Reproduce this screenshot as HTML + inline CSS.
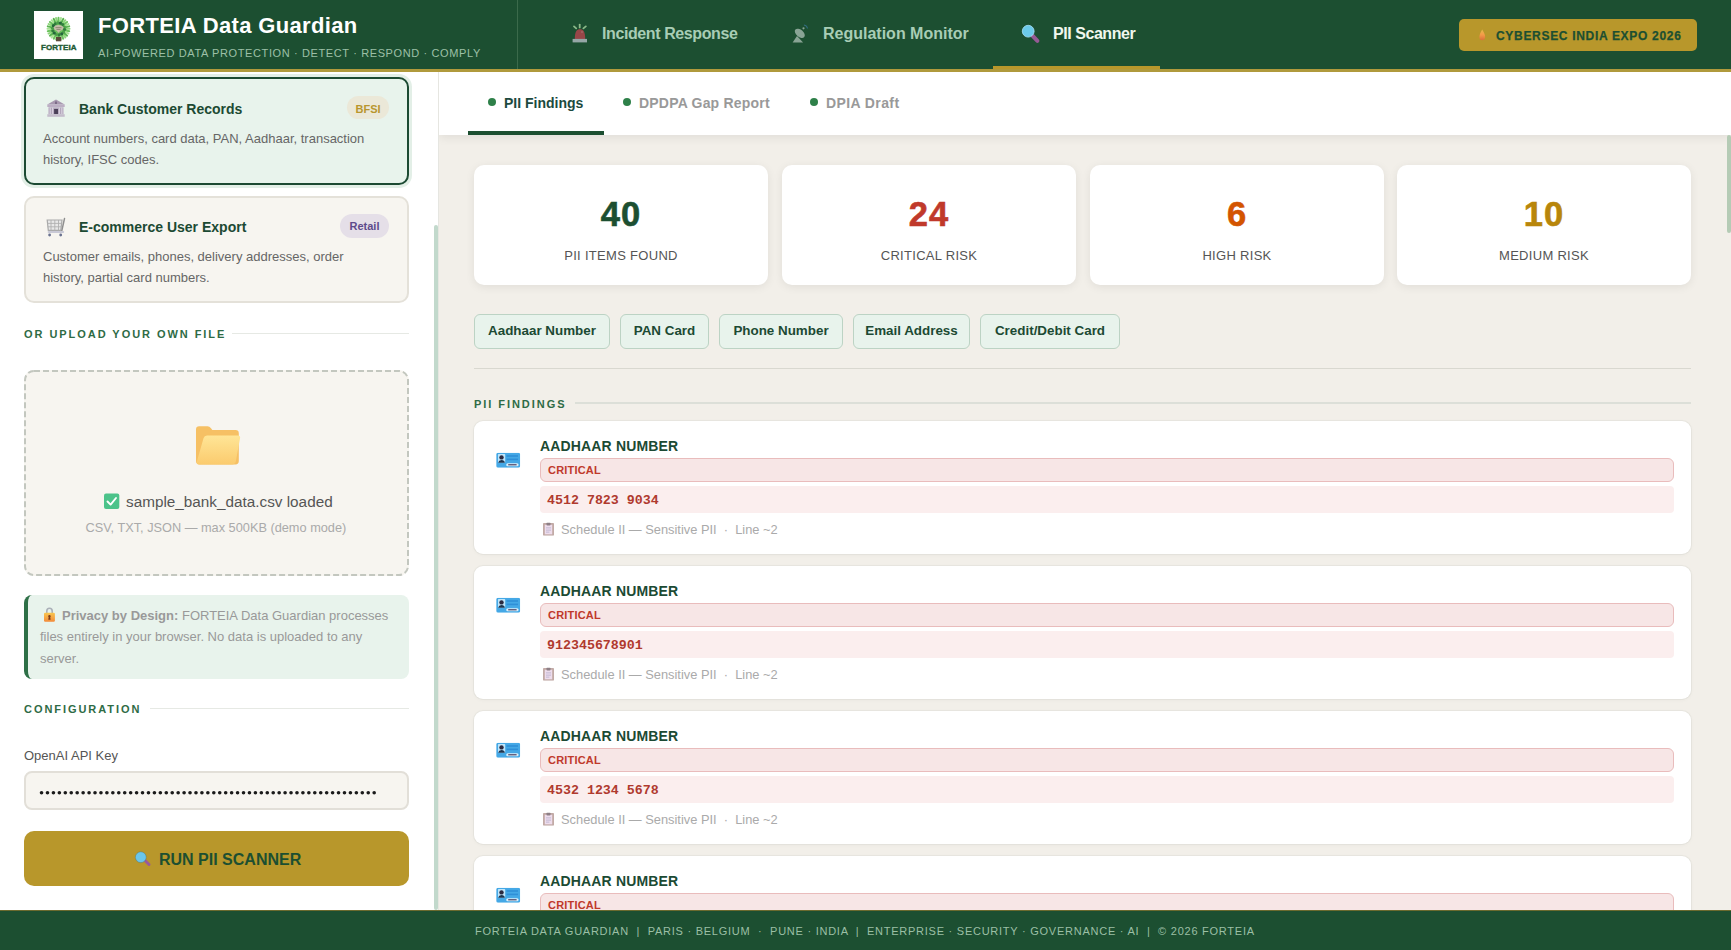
<!DOCTYPE html>
<html><head><meta charset="utf-8">
<style>
*{box-sizing:border-box;margin:0;padding:0}
html,body{width:1731px;height:950px;overflow:hidden;background:#fff;font-family:"Liberation Sans",sans-serif}
.abs{position:absolute}
#hdr{position:absolute;left:0;top:0;width:1731px;height:72px;background:#1c4f31;border-bottom:3px solid #b09a3c}
#logo{position:absolute;left:34px;top:11px;width:49px;height:48px;background:#fff}
#title{position:absolute;left:98px;top:13px;color:#fff;font-weight:bold;font-size:22px;letter-spacing:0.35px;white-space:nowrap}
#subtitle{position:absolute;left:98px;top:47px;color:#9dc0a7;font-size:11px;letter-spacing:0.62px;white-space:nowrap}
#vdiv{position:absolute;left:517px;top:0;width:1px;height:69px;background:#3b6a4b}
.nav{position:absolute;top:0;height:69px;white-space:nowrap}
.nav .ic{position:absolute;top:24px}
.nav .tx{position:absolute;top:25px;font-size:16px;font-weight:bold;color:#a8cdb5}
#badge{position:absolute;left:1459px;top:19px;width:238px;height:32px;background:#b8972b;border-radius:5px}
#badge .tx{position:absolute;left:37px;top:10px;font-size:12px;font-weight:bold;color:#1c4f31;letter-spacing:0.69px;white-space:nowrap;-webkit-text-stroke:0.25px #1c4f31}

#side{position:absolute;left:0;top:72px;width:439px;height:838px;background:#fff;border-right:1px solid #e6e6e1;overflow:hidden}
.card{position:absolute;left:24px;width:385px;border-radius:10px}
.card .ttl{position:absolute;left:53px;font-size:14px;font-weight:bold;color:#1c4a33;white-space:nowrap}
.card .desc{position:absolute;left:17px;font-size:13px;color:#666;line-height:20.7px;width:335px}
.pill{position:absolute;border-radius:12px;font-size:11px;font-weight:bold;text-align:center}
.sec{position:absolute;left:24px;font-size:11px;font-weight:bold;color:#2e6b45;letter-spacing:1.95px;white-space:nowrap}
.secline{position:absolute;height:1px;background:#e6e9e4}

#main{position:absolute;left:439px;top:72px;width:1292px;height:838px;background:#f2efe9;overflow:hidden}
#tabs{position:absolute;left:0;top:0;width:1292px;height:63px;background:#fff;box-shadow:0 3px 9px rgba(0,0,0,0.07)}
.tab{position:absolute;top:0;height:63px;white-space:nowrap}
.tab .dot{position:absolute;top:26px;width:8px;height:8px;border-radius:50%;background:#2e8049}
.tab .tx{position:absolute;top:22.5px;font-size:14px;font-weight:bold;color:#999;letter-spacing:0.2px}
.stat{position:absolute;top:93px;width:294px;height:120px;background:#fff;border-radius:10px;box-shadow:0 2px 10px rgba(0,0,0,0.075)}
.stat .n{position:absolute;left:0;width:100%;top:29.5px;text-align:center;font-size:34.5px;font-weight:bold;letter-spacing:1px;-webkit-text-stroke:0.6px currentColor}
.stat .l{position:absolute;left:0;width:100%;top:82.5px;text-align:center;font-size:13px;color:#555;letter-spacing:0.3px}
.chip{position:absolute;top:242px;height:35px;background:#e8f3ec;border:1.5px solid #bcd3c4;border-radius:6px;font-size:13.4px;font-weight:bold;color:#1c4a33;line-height:32px;text-align:center;white-space:nowrap}
.find{position:absolute;left:35px;width:1217px;height:133px;background:#fff;border-radius:9px;box-shadow:0 0 0 1px rgba(40,60,40,0.045),0 1px 4px rgba(0,0,0,0.04)}
.find .ic{position:absolute;left:22px;top:32px}
.find .nm{position:absolute;left:66px;top:17.3px;font-size:14px;font-weight:bold;color:#1c4a33;letter-spacing:0.16px;white-space:nowrap}
.find .sev{position:absolute;left:66px;top:37px;width:1134px;height:24px;background:#f7e6e6;border:1.5px solid #e9bcbc;border-radius:6px}
.find .sev span{position:absolute;left:7px;top:5px;font-size:11px;font-weight:bold;color:#c0392b;letter-spacing:0.2px}
.find .val{position:absolute;left:66px;top:65px;width:1134px;height:27px;background:#fbeeee;border-radius:4px}
.find .val span{position:absolute;left:7px;top:7px;font-family:"Liberation Mono",monospace;font-size:13.3px;font-weight:bold;color:#b03a2e}
.find .meta{position:absolute;left:69px;top:101px;white-space:nowrap}
.find .meta span{position:absolute;left:18px;top:0;font-size:12.85px;color:#aaa;white-space:nowrap}

#foot{position:absolute;left:0;top:910px;width:1731px;height:40px;background:#1c4f31;border-top:1px solid #6b6a2e}
#foot .tx{position:absolute;left:475px;top:13.5px;font-size:11px;color:#9bbfa5;letter-spacing:0.75px;white-space:nowrap}
</style></head>
<body>
<div id="hdr">
  <div id="logo"></div>
  <div id="title">FORTEIA Data Guardian</div>
  <div id="subtitle">AI-POWERED DATA PROTECTION · DETECT · RESPOND · COMPLY</div>
  <div id="vdiv"></div>
  <div class="nav" style="left:546px;width:220px"><div class="tx" style="left:56px;letter-spacing:-0.4px">Incident Response</div></div>
  <div class="nav" style="left:766px;width:227px"><div class="tx" style="left:57px">Regulation Monitor</div></div>
  <div class="nav" style="left:993px;width:167px"><div class="tx" style="left:60px;color:#f0f7ee;letter-spacing:-0.45px">PII Scanner</div>
    <div class="abs" style="left:0;top:66px;width:167px;height:3px;background:#b8972b"></div></div>
  <div id="badge"><div class="tx">CYBERSEC INDIA EXPO 2026</div></div>
</div>

<div id="side">
  <div class="card" style="top:5px;height:108px;background:#e8f3ec;border:2px solid #1c4a33;box-shadow:0 0 0 3px #e3efe7">
    <div class="ttl" style="top:22px">Bank Customer Records</div>
    <div class="pill" style="left:321px;top:17px;width:42px;height:23px;line-height:27px;background:#ebe8d8;color:#b8962e">BFSI</div>
    <div class="desc" style="top:50px">Account numbers, card data, PAN, Aadhaar, transaction history, IFSC codes.</div>
  </div>
  <div class="card" style="top:124px;height:107px;background:#f7f5f0;border:2px solid #e4e1d9">
    <div class="ttl" style="top:20.5px">E-commerce User Export</div>
    <div class="pill" style="left:314px;top:16px;width:49px;height:24px;line-height:25px;background:#e5dfe8;color:#5e4b8b">Retail</div>
    <div class="desc" style="top:49px">Customer emails, phones, delivery addresses, order history, partial card numbers.</div>
  </div>
  <div class="sec" style="top:256px">OR UPLOAD YOUR OWN FILE</div>
  <div class="secline" style="left:232px;top:261px;width:177px"></div>
  <div class="abs" style="left:24px;top:298px;width:385px;height:206px;background:#f7f5f0;border-radius:10px"><svg class="abs" style="left:0;top:0" width="385" height="206"><rect x="1" y="1" width="383" height="204" rx="9" fill="none" stroke="#c3c7bf" stroke-width="2" stroke-dasharray="6 3"/></svg>
    <div class="abs" style="left:102px;top:123px;font-size:15.3px;color:#555;white-space:nowrap">sample_bank_data.csv loaded</div>
    <div class="abs" style="left:61.5px;top:150px;font-size:12.75px;color:#aaa;white-space:nowrap">CSV, TXT, JSON — max 500KB (demo mode)</div>
  </div>
  <div class="abs" style="left:24px;top:523px;width:385px;height:84px;background:#e8f3ec;border-left:4px solid #2e7047;border-radius:8px">
    <div class="abs" style="left:12px;top:10px;width:360px;font-size:13px;line-height:21.4px;color:#999"><span style="display:inline-block;width:22px"></span><b style="color:#999">Privacy by Design:</b> FORTEIA Data Guardian processes files entirely in your browser. No data is uploaded to any server.</div>
  </div>
  <div class="sec" style="top:631px">CONFIGURATION</div>
  <div class="secline" style="left:150px;top:636px;width:259px"></div>
  <div class="abs" style="left:24px;top:676px;font-size:13px;color:#555">OpenAI API Key</div>
  <div class="abs" style="left:24px;top:699px;width:385px;height:39px;background:#f7f5f0;border:2px solid #e2dfd8;border-radius:8px"></div>
  <div class="abs" style="left:24px;top:759px;width:385px;height:55px;background:#b8972b;border-radius:10px">
    <div class="abs" style="left:135px;top:20px;font-size:16px;font-weight:bold;color:#1c4f31;white-space:nowrap">RUN PII SCANNER</div>
  </div>
  <div class="abs" style="left:434px;top:153px;width:4px;height:685px;background:#c2d9cc;border-radius:2px"></div>
</div>

<div id="main">
  <div id="tabs">
    <div class="tab" style="left:29px;width:136px"><div class="dot" style="left:20px"></div><div class="tx" style="left:36px;color:#1c4a3e;letter-spacing:0">PII Findings</div>
      <div class="abs" style="left:0;top:59px;width:136px;height:4px;background:#1c4f31"></div></div>
    <div class="tab" style="left:165px;width:185px"><div class="dot" style="left:19px"></div><div class="tx" style="left:35px">DPDPA Gap Report</div></div>
    <div class="tab" style="left:350px;width:130px"><div class="dot" style="left:21px"></div><div class="tx" style="left:37px;letter-spacing:0.4px">DPIA Draft</div></div>
  </div>
  <div class="stat" style="left:35px"><div class="n" style="color:#1c4f31">40</div><div class="l">PII ITEMS FOUND</div></div>
  <div class="stat" style="left:343px"><div class="n" style="color:#c0392b">24</div><div class="l">CRITICAL RISK</div></div>
  <div class="stat" style="left:651px"><div class="n" style="color:#d35400">6</div><div class="l">HIGH RISK</div></div>
  <div class="stat" style="left:958px"><div class="n" style="color:#b8860b">10</div><div class="l">MEDIUM RISK</div></div>
  <div class="chip" style="left:35px;width:136px">Aadhaar Number</div>
  <div class="chip" style="left:181px;width:89px">PAN Card</div>
  <div class="chip" style="left:280px;width:124px">Phone Number</div>
  <div class="chip" style="left:414px;width:117px">Email Address</div>
  <div class="chip" style="left:541px;width:140px">Credit/Debit Card</div>
  <div class="abs" style="left:35px;top:296px;width:1217px;height:1px;background:#d9d8d0"></div>
  <div class="sec" style="left:35px;top:326px">PII FINDINGS</div>
  <div class="abs" style="left:136px;top:330px;width:1116px;height:2px;background:#dcdfd8"></div>

  <div class="find" style="top:349px"><div class="nm">AADHAAR NUMBER</div><div class="sev"><span>CRITICAL</span></div><div class="val"><span>4512 7823 9034</span></div><div class="meta"><span>Schedule II — Sensitive PII &nbsp;·&nbsp; Line ~2</span></div></div>
  <div class="find" style="top:494px"><div class="nm">AADHAAR NUMBER</div><div class="sev"><span>CRITICAL</span></div><div class="val"><span>912345678901</span></div><div class="meta"><span>Schedule II — Sensitive PII &nbsp;·&nbsp; Line ~2</span></div></div>
  <div class="find" style="top:639px"><div class="nm">AADHAAR NUMBER</div><div class="sev"><span>CRITICAL</span></div><div class="val"><span>4532 1234 5678</span></div><div class="meta"><span>Schedule II — Sensitive PII &nbsp;·&nbsp; Line ~2</span></div></div>
  <div class="find" style="top:784px"><div class="nm">AADHAAR NUMBER</div><div class="sev"><span>CRITICAL</span></div><div class="val"><span>4512 7823 9034</span></div></div>

  <div class="abs" style="left:1288px;top:63px;width:4px;height:98px;background:#b5cbb5;border-radius:2px"></div>
</div>

<svg id="ov" width="1731" height="950" viewBox="0 0 1731 950" style="position:absolute;left:0;top:0;pointer-events:none">
<defs>
 <radialGradient id="gFol" cx="0.5" cy="0.5" r="0.5"><stop offset="0" stop-color="#4a9a4a"/><stop offset="0.6" stop-color="#5fb85a"/><stop offset="1" stop-color="#8fd07a"/></radialGradient>
 <linearGradient id="gFold" x1="0" y1="0" x2="0" y2="1"><stop offset="0" stop-color="#ffe596"/><stop offset="1" stop-color="#fbcb6e"/></linearGradient>
 <linearGradient id="gLock" x1="0" y1="0" x2="0" y2="1"><stop offset="0" stop-color="#f9c74f"/><stop offset="1" stop-color="#f38a3a"/></linearGradient>
 <linearGradient id="gFlame" x1="0" y1="0" x2="0" y2="1"><stop offset="0" stop-color="#e8b84a"/><stop offset="0.5" stop-color="#f49a48"/><stop offset="1" stop-color="#d9703a"/></linearGradient>
<symbol id="idc" viewBox="0 0 24 15" width="24" height="15">
 <rect x="0" y="0" width="24" height="15" rx="1.8" fill="#44a8e6"/>
 <rect x="1.8" y="1.3" width="7.2" height="8.6" rx="0.6" fill="#bfe6fb"/>
 <circle cx="5.3" cy="4.6" r="2.2" fill="#2c2a40"/>
 <path d="M2 9.9 Q2.4 7.4 5.3 7.3 Q8.3 7.4 8.6 9.9Z" fill="#1f3650"/>
 <rect x="10.3" y="2.4" width="11.5" height="1.6" fill="#2f8fd8"/>
 <rect x="10.3" y="5.8" width="11.5" height="1.6" fill="#2f8fd8"/>
 <rect x="10" y="10.4" width="12.4" height="3" rx="1.5" fill="#d8f0fc"/>
 <rect x="12" y="11.3" width="8.4" height="1.3" fill="#5a5070"/>
</symbol>
<symbol id="clip" viewBox="0 0 11 13.3" width="11" height="13.3">
 <rect x="0" y="0.6" width="11" height="12.7" rx="0.8" fill="#c2aaa6"/>
 <rect x="1.8" y="2.3" width="7.4" height="9.5" fill="#eddcec"/>
 <rect x="3.5" y="0" width="4" height="3" rx="0.8" fill="#8e7f86"/>
 <rect x="3" y="5" width="5" height="0.8" fill="#b8b0cc"/><rect x="3" y="7.2" width="5" height="0.8" fill="#b8b0cc"/><rect x="3" y="9.2" width="3.4" height="0.8" fill="#b8b0cc"/>
</symbol>
</defs>
<!-- logo tree -->
<g>
 <circle cx="58.5" cy="28.8" r="8.5" fill="#6cbf5c"/>
 <path d="M65.00 28.80 L69.50 28.80" stroke="#8fd67c" stroke-width="2" stroke-linecap="round"/><path d="M64.84 30.25 L69.22 31.25" stroke="#6cc25e" stroke-width="2" stroke-linecap="round"/><path d="M64.36 31.62 L68.41 33.57" stroke="#a6e292" stroke-width="2" stroke-linecap="round"/><path d="M63.58 32.85 L67.10 35.66" stroke="#5ab450" stroke-width="2" stroke-linecap="round"/><path d="M62.55 33.88 L65.36 37.40" stroke="#8fd67c" stroke-width="2" stroke-linecap="round"/><path d="M61.32 34.66 L63.27 38.71" stroke="#6cc25e" stroke-width="2" stroke-linecap="round"/><path d="M59.95 35.14 L60.95 39.52" stroke="#a6e292" stroke-width="2" stroke-linecap="round"/><path d="M58.50 35.30 L58.50 39.80" stroke="#5ab450" stroke-width="2" stroke-linecap="round"/><path d="M57.05 35.14 L56.05 39.52" stroke="#8fd67c" stroke-width="2" stroke-linecap="round"/><path d="M55.68 34.66 L53.73 38.71" stroke="#6cc25e" stroke-width="2" stroke-linecap="round"/><path d="M54.45 33.88 L51.64 37.40" stroke="#a6e292" stroke-width="2" stroke-linecap="round"/><path d="M53.42 32.85 L49.90 35.66" stroke="#5ab450" stroke-width="2" stroke-linecap="round"/><path d="M52.64 31.62 L48.59 33.57" stroke="#8fd67c" stroke-width="2" stroke-linecap="round"/><path d="M52.16 30.25 L47.78 31.25" stroke="#6cc25e" stroke-width="2" stroke-linecap="round"/><path d="M52.00 28.80 L47.50 28.80" stroke="#a6e292" stroke-width="2" stroke-linecap="round"/><path d="M52.16 27.35 L47.78 26.35" stroke="#5ab450" stroke-width="2" stroke-linecap="round"/><path d="M52.64 25.98 L48.59 24.03" stroke="#8fd67c" stroke-width="2" stroke-linecap="round"/><path d="M53.42 24.75 L49.90 21.94" stroke="#6cc25e" stroke-width="2" stroke-linecap="round"/><path d="M54.45 23.72 L51.64 20.20" stroke="#a6e292" stroke-width="2" stroke-linecap="round"/><path d="M55.68 22.94 L53.73 18.89" stroke="#5ab450" stroke-width="2" stroke-linecap="round"/><path d="M57.05 22.46 L56.05 18.08" stroke="#8fd67c" stroke-width="2" stroke-linecap="round"/><path d="M58.50 22.30 L58.50 17.80" stroke="#6cc25e" stroke-width="2" stroke-linecap="round"/><path d="M59.95 22.46 L60.95 18.08" stroke="#a6e292" stroke-width="2" stroke-linecap="round"/><path d="M61.32 22.94 L63.27 18.89" stroke="#5ab450" stroke-width="2" stroke-linecap="round"/><path d="M62.55 23.72 L65.36 20.20" stroke="#8fd67c" stroke-width="2" stroke-linecap="round"/><path d="M63.58 24.75 L67.10 21.94" stroke="#6cc25e" stroke-width="2" stroke-linecap="round"/><path d="M64.36 25.98 L68.41 24.03" stroke="#a6e292" stroke-width="2" stroke-linecap="round"/><path d="M64.84 27.35 L69.22 26.35" stroke="#5ab450" stroke-width="2" stroke-linecap="round"/>
 <circle cx="64.47" cy="29.40" r="1.6" fill="#2f7d3c"/><circle cx="63.62" cy="31.93" r="1.6" fill="#4a9e48"/><circle cx="61.75" cy="33.84" r="1.6" fill="#23673a"/><circle cx="59.24" cy="34.75" r="1.6" fill="#2f7d3c"/><circle cx="56.59" cy="34.49" r="1.6" fill="#4a9e48"/><circle cx="54.31" cy="33.09" r="1.6" fill="#23673a"/><circle cx="52.86" cy="30.85" r="1.6" fill="#2f7d3c"/><circle cx="52.53" cy="28.20" r="1.6" fill="#4a9e48"/><circle cx="53.38" cy="25.67" r="1.6" fill="#23673a"/><circle cx="55.25" cy="23.76" r="1.6" fill="#2f7d3c"/><circle cx="57.76" cy="22.85" r="1.6" fill="#4a9e48"/><circle cx="60.41" cy="23.11" r="1.6" fill="#23673a"/><circle cx="62.69" cy="24.51" r="1.6" fill="#2f7d3c"/><circle cx="64.14" cy="26.75" r="1.6" fill="#4a9e48"/>
 <path d="M53.5 27.3 Q55.5 24.8 58.5 25 Q62 24.8 63.8 27.5 Q63 30.2 60.3 30.8 L58.5 33 L56.7 30.8 Q54 30.2 53.5 27.3Z" fill="#c4bca8"/>
 <path d="M55.5 27.6 h6 M56.5 29.4 h4" stroke="#857c6c" stroke-width="0.8"/>
 <rect x="56" y="36.9" width="5.3" height="4.4" fill="#5a4a3a"/>
 <text x="58.8" y="49.8" text-anchor="middle" font-family="Liberation Sans" font-weight="bold" font-size="8" fill="#1f5a33" letter-spacing="0.1" stroke="#1f5a33" stroke-width="0.4">FORTEIA</text>
</g>
<!-- siren -->
<g opacity="0.8">
 <path d="M574.8 38.9 C574.8 31.5 576.8 29.3 580 29.3 C583.2 29.3 585.2 31.5 585.2 38.9Z" fill="#b8444e"/>
 <ellipse cx="582" cy="32" rx="1" ry="0.8" fill="#e0a0a0" opacity="0.6"/>
 <rect x="572.6" y="38.9" width="14.4" height="3.5" fill="#b4bcc4"/>
 <path d="M579.7 24.6 V27.4" stroke="#a8d4a0" stroke-width="1.8" stroke-linecap="round"/>
 <path d="M574 26.4 L576.2 28.4" stroke="#a8d4a0" stroke-width="1.8" stroke-linecap="round"/>
 <path d="M585.8 26.4 L583.4 28.4" stroke="#a8d4a0" stroke-width="1.8" stroke-linecap="round"/>
</g>
<!-- satellite dish -->
<g opacity="0.7">
 <path d="M792.6 42.4 L797 36 L803.1 42.4Z" fill="#b8c8c0"/>
 <ellipse cx="799.8" cy="33.3" rx="5.8" ry="3.6" transform="rotate(40 799.8 33.3)" fill="#b8c8c0"/>
 <circle cx="803.5" cy="28.3" r="1.1" fill="#b8c8c0"/>
 <path d="M804 25 Q807 25.5 807.5 28.5" stroke="#3a7aa0" stroke-width="1.1" fill="none"/>
</g>
<!-- magnifier nav -->
<g>
 <path d="M1032.8 36 L1037.4 40.8" stroke="#955a95" stroke-width="4" stroke-linecap="round"/>
 <circle cx="1028.2" cy="31.2" r="5.9" fill="#6ccaea"/>
 <circle cx="1028.2" cy="31.2" r="5.9" fill="none" stroke="#a8e0f8" stroke-width="0.8"/>
</g>
<!-- flame -->
<path d="M1482.2 29.6 Q1485.5 35 1485.1 37.3 Q1484.8 40.2 1482.2 40.2 Q1479.5 40.2 1479.4 37.3 Q1479.3 34.5 1482.2 29.6Z" fill="url(#gFlame)"/>
<!-- bank -->
<g>
 <path d="M56 99.4 L64.7 104.6 H47.3Z" fill="#a898b0"/>
 <rect x="47.3" y="104.4" width="17.4" height="2.6" fill="#bcaec4"/>
 <rect x="48.5" y="107.3" width="15" height="6.9" fill="#b3a6bc"/>
 <rect x="49.6" y="107.5" width="1.2" height="6.6" fill="#d8d0de"/><rect x="52" y="107.5" width="1.2" height="6.6" fill="#d8d0de"/>
 <rect x="58.8" y="107.5" width="1.2" height="6.6" fill="#d8d0de"/><rect x="61.2" y="107.5" width="1.2" height="6.6" fill="#d8d0de"/>
 <rect x="54.1" y="109" width="3.9" height="5.2" fill="#4a4058"/>
 <rect x="47.3" y="114.2" width="17.4" height="2.6" fill="#c4bccb"/>
 <path d="M55.3 101.5 h1.4 v2.4 h-1.4z" fill="#6a5a78"/>
</g>
<!-- cart -->
<g>
 <path d="M47.2 220 H62 L60.8 230.3 H48.3Z" fill="#e8e8e8" stroke="#a9a9a9" stroke-width="1.2"/>
 <path d="M51 220 V230.3 M54.8 220 V230.3 M58.5 220 V230.3 M47.5 223.4 H61.6 M47.8 226.8 H61.2" stroke="#b0b0b0" stroke-width="0.9"/>
 <path d="M64.5 218.6 L61.6 231.6" stroke="#8f8f8f" stroke-width="1.5" stroke-linecap="round"/>
 <rect x="47.6" y="231" width="16.5" height="2" rx="1" fill="#c9c9d6"/>
 <circle cx="49.6" cy="235" r="1.4" fill="#6a7290"/><circle cx="60.7" cy="235" r="1.4" fill="#6a7290"/>
</g>
<!-- folder -->
<g>
 <path d="M196 429.5 Q196 426.3 199.2 426.3 H207.5 Q209.5 426.3 211 428.3 L212.3 430 H235.5 Q238.8 430 238.8 433.2 V461 Q238.8 464.4 235.5 464.4 H199.2 Q196 464.4 196 461Z" fill="#f6c064"/>
 <path d="M203.5 438.3 Q204.3 435.6 207 435.6 H237.6 Q240.8 435.6 240 438.6 L235.8 461.6 Q235.2 464.4 232.3 464.4 H199.3 Q196.3 464.4 196.9 461.5Z" fill="url(#gFold)"/>
</g>
<!-- checkbox -->
<g>
 <rect x="104" y="493.5" width="15.3" height="15.4" rx="2" fill="#4cc38a"/>
 <path d="M107.5 501.5 L110.6 504.6 L116 498" stroke="#fff" stroke-width="1.9" fill="none" stroke-linecap="round" stroke-linejoin="round"/>
</g>
<!-- lock -->
<g>
 <path d="M46.8 613 V611 Q46.8 608.3 49.5 608.3 Q52.2 608.3 52.2 611 V613" stroke="#aab0b8" stroke-width="1.6" fill="none"/>
 <rect x="44" y="612.7" width="10.9" height="9.1" rx="1.2" fill="url(#gLock)"/>
 <path d="M49.45 615 a1.3 1.3 0 0 1 0.8 2.3 l0.35 2.4 h-2.3 l0.35 -2.4 a1.3 1.3 0 0 1 0.8 -2.3z" fill="#7a3a1a"/>
</g>
<!-- button magnifier -->
<g>
 <path d="M145 860.5 L149 864.5" stroke="#9a5a9a" stroke-width="3" stroke-linecap="round"/>
 <circle cx="140.8" cy="857.2" r="5.4" fill="#6ac6ea"/>
 <circle cx="140.8" cy="857.2" r="5.4" fill="none" stroke="#3a6a7a" stroke-width="0.7" opacity="0.5"/>
</g>
<!-- password dots -->
<g fill="#1a1a1a"><circle cx="41.55" cy="792.7" r="1.8"/><circle cx="47.49" cy="792.7" r="1.8"/><circle cx="53.43" cy="792.7" r="1.8"/><circle cx="59.37" cy="792.7" r="1.8"/><circle cx="65.31" cy="792.7" r="1.8"/><circle cx="71.25" cy="792.7" r="1.8"/><circle cx="77.19" cy="792.7" r="1.8"/><circle cx="83.13" cy="792.7" r="1.8"/><circle cx="89.07" cy="792.7" r="1.8"/><circle cx="95.01" cy="792.7" r="1.8"/><circle cx="100.95" cy="792.7" r="1.8"/><circle cx="106.89" cy="792.7" r="1.8"/><circle cx="112.83" cy="792.7" r="1.8"/><circle cx="118.77" cy="792.7" r="1.8"/><circle cx="124.71" cy="792.7" r="1.8"/><circle cx="130.65" cy="792.7" r="1.8"/><circle cx="136.59" cy="792.7" r="1.8"/><circle cx="142.53" cy="792.7" r="1.8"/><circle cx="148.47" cy="792.7" r="1.8"/><circle cx="154.41" cy="792.7" r="1.8"/><circle cx="160.35" cy="792.7" r="1.8"/><circle cx="166.29" cy="792.7" r="1.8"/><circle cx="172.23" cy="792.7" r="1.8"/><circle cx="178.17" cy="792.7" r="1.8"/><circle cx="184.11" cy="792.7" r="1.8"/><circle cx="190.05" cy="792.7" r="1.8"/><circle cx="195.99" cy="792.7" r="1.8"/><circle cx="201.93" cy="792.7" r="1.8"/><circle cx="207.87" cy="792.7" r="1.8"/><circle cx="213.81" cy="792.7" r="1.8"/><circle cx="219.75" cy="792.7" r="1.8"/><circle cx="225.69" cy="792.7" r="1.8"/><circle cx="231.63" cy="792.7" r="1.8"/><circle cx="237.57" cy="792.7" r="1.8"/><circle cx="243.51" cy="792.7" r="1.8"/><circle cx="249.45" cy="792.7" r="1.8"/><circle cx="255.39" cy="792.7" r="1.8"/><circle cx="261.33" cy="792.7" r="1.8"/><circle cx="267.27" cy="792.7" r="1.8"/><circle cx="273.21" cy="792.7" r="1.8"/><circle cx="279.15" cy="792.7" r="1.8"/><circle cx="285.09" cy="792.7" r="1.8"/><circle cx="291.03" cy="792.7" r="1.8"/><circle cx="296.97" cy="792.7" r="1.8"/><circle cx="302.91" cy="792.7" r="1.8"/><circle cx="308.85" cy="792.7" r="1.8"/><circle cx="314.79" cy="792.7" r="1.8"/><circle cx="320.73" cy="792.7" r="1.8"/><circle cx="326.67" cy="792.7" r="1.8"/><circle cx="332.61" cy="792.7" r="1.8"/><circle cx="338.55" cy="792.7" r="1.8"/><circle cx="344.49" cy="792.7" r="1.8"/><circle cx="350.43" cy="792.7" r="1.8"/><circle cx="356.37" cy="792.7" r="1.8"/><circle cx="362.31" cy="792.7" r="1.8"/><circle cx="368.25" cy="792.7" r="1.8"/><circle cx="374.19" cy="792.7" r="1.8"/></g>
<use href="#idc" x="496.2" y="452.8" width="24" height="15"/><use href="#clip" x="543" y="522.5" width="11" height="13.3"/><use href="#idc" x="496.2" y="597.8" width="24" height="15"/><use href="#clip" x="543" y="667.5" width="11" height="13.3"/><use href="#idc" x="496.2" y="742.8" width="24" height="15"/><use href="#clip" x="543" y="812.5" width="11" height="13.3"/><use href="#idc" x="496.2" y="887.8" width="24" height="15"/>
</svg>
<div id="foot"><div class="tx">FORTEIA DATA GUARDIAN &nbsp;|&nbsp; PARIS · BELGIUM &nbsp;·&nbsp; PUNE · INDIA &nbsp;|&nbsp; ENTERPRISE · SECURITY · GOVERNANCE · AI &nbsp;|&nbsp; © 2026 FORTEIA</div></div>
</body></html>
